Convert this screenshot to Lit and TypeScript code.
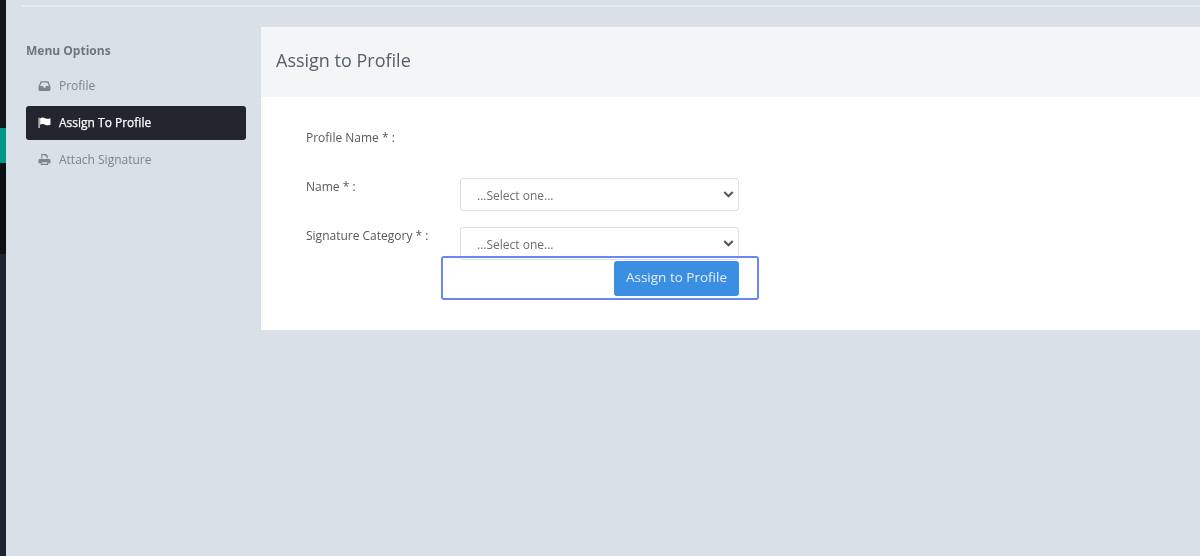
import { LitElement, html, css } from "lit";
import { customElement } from "lit/decorators.js";

@customElement("app-root")
export class AppRoot extends LitElement {
  static styles = css`
    :host {
      display: block;
      width: 1200px;
      height: 556px;
      overflow: hidden;
      font-family: "Open Sans", "Noto Sans", sans-serif;
      font-size: 12px;
      color: #676a6c;
    }
    * { box-sizing: border-box; }
    .page { display: flex; height: 556px; background: #d9e0e8; filter: blur(0.5px); }
    .strip { width: 6px; display: flex; flex-direction: column; background: #14181d; flex: none; }
    .strip-top { height: 128px; background: #14181d; }
    .strip-teal { height: 35px; background: #009688; }
    .strip-mid { height: 91px; background: #0d1014; }
    .strip-bottom { flex: 1; background: #1c2530; }
    .main { flex: 1; padding-left: 16px; min-width: 0; }
    .topline { height: 2px; margin-top: 5px; background: #e6ebf0; }
    .content { display: flex; margin-top: 20px; padding-left: 4px; }
    .side { width: 220px; flex: none; margin-right: 15px; }
    .side h4 { margin: 15px 0 0; height: 18px; line-height: 18px; font-size: 12px; font-weight: 700; color: #6f7680; }
    .menu { display: flex; flex-direction: column; gap: 3px; margin-top: 9px; }
    .item { display: flex; align-items: center; gap: 8px; height: 34px; padding: 0 0 2px 12px; border-radius: 3px; color: #7d848d; }
    .item svg { width: 13px; height: 13px; fill: currentColor; flex: none; }
    .item.active { background: #23262f; color: #fff; font-weight: 400; -webkit-text-stroke: 0.25px #fff; }
    .card { flex: 1; min-width: 0; height: 303px; background: #fff; display: flex; flex-direction: column; }
    .card-head { height: 70px; background: #f3f5f7; display: flex; align-items: center; padding: 0 0 4px 15px; }
    .card-head h2 { margin: 0; font-size: 18px; font-weight: 400; color: #555e69; line-height: 1; }
    .form { padding: 27px 0 0 45px; display: grid; grid-template-columns: 154px 279px; grid-auto-rows: 33px; row-gap: 16px; align-items: start; }
    .form label { line-height: 28px; color: #55585d; }
    select {
      appearance: none;
      width: 279px;
      height: 33px;
      margin: 5px 0 0;
      padding: 2px 0 0 16px;
      font: 12px "Open Sans", sans-serif;
      color: #6b6e72;
      background: #fff url("data:image/svg+xml,%3Csvg xmlns='http://www.w3.org/2000/svg' width='11' height='7' viewBox='0 0 12 8'%3E%3Cpath d='M1.200 1.200L6 6l4.800-4.800' fill='none' stroke='%23555' stroke-width='2.300'/%3E%3C/svg%3E") no-repeat right 4px center;
      border: 1px solid #dcdfe3;
      border-radius: 3px;
    }
    .actions { display: flex; justify-content: flex-end; grid-column: 1 / 3; margin-top: -10px; }
    .btn {
      width: 125px;
      height: 35px;
      border: 0;
      border-radius: 3px;
      background: #3a8fe3;
      color: #e6f0fb;
      font: 13.500px "Open Sans", sans-serif;
      padding: 0 0 3px;
    }
    .form-wrap { position: relative; }
    .highlight {
      position: absolute;
      left: 180px;
      top: 159px;
      width: 318px;
      height: 44px;
      border: 2px solid #6a88f5;
      border-radius: 3px;
      pointer-events: none;
    }
  `;

  render() {
    return html`
      <div class="page">
        <div class="strip">
          <div class="strip-top"></div>
          <div class="strip-teal"></div>
          <div class="strip-mid"></div>
          <div class="strip-bottom"></div>
        </div>
        <div class="main">
          <div class="topline"></div>
          <div class="content">
            <aside class="side">
              <h4>Menu Options</h4>
              <div class="menu">
                <div class="item">
                  <svg viewBox="0 0 24 24"><path d="M5 4h14l4 10v6a2 2 0 0 1-2 2H3a2 2 0 0 1-2-2v-6L5 4zm1.600 2.500L4 13h5l1.500 3h3l1.500-3h5l-2.600-6.500H6.600z"/></svg>
                  <span>Profile</span>
                </div>
                <div class="item active">
                  <svg viewBox="0 0 24 24"><path d="M1 3h2v19H1V3zm3 1c3-1.500 6-1.500 9 0s6 1.500 10 0v12c-4 1.500-7 1.500-10 0s-6-1.500-9 0V4z"/></svg>
                  <span>Assign To Profile</span>
                </div>
                <div class="item">
                  <svg viewBox="0 0 24 24"><path d="M6 2h9l3 3v5h-2V6h-3V4H8v6H6V2zM3 11h18a2 2 0 0 1 2 2v6h-4v3H5v-3H1v-6a2 2 0 0 1 2-2zm4 6v3h10v-3H7z"/></svg>
                  <span>Attach Signature</span>
                </div>
              </div>
            </aside>
            <section class="card">
              <div class="card-head"><h2>Assign to Profile</h2></div>
              <div class="form-wrap">
                <div class="form">
                  <label>Profile Name * :</label>
                  <div></div>
                  <label>Name * :</label>
                  <select><option>...Select one...</option></select>
                  <label>Signature Category * :</label>
                  <select><option>...Select one...</option></select>
                  <div class="actions"><button class="btn">Assign to Profile</button></div>
                </div>
                <div class="highlight"></div>
              </div>
            </section>
          </div>
        </div>
      </div>
    `;
  }
}
